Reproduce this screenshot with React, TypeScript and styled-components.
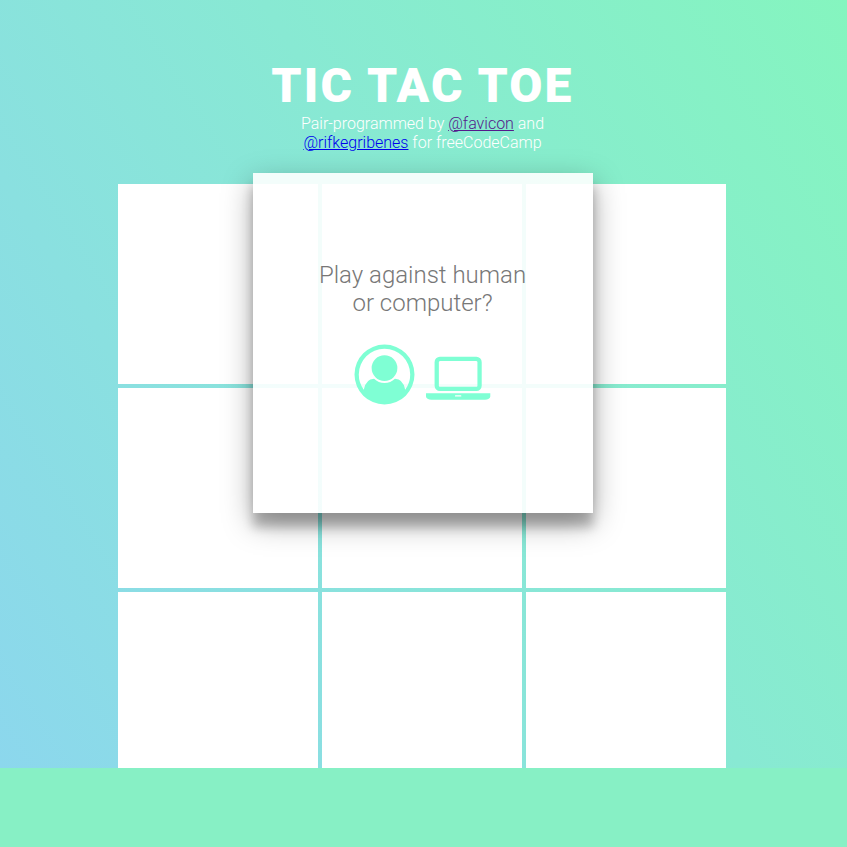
import React from "react";
import styled, { createGlobalStyle } from "styled-components";

const GlobalStyle = createGlobalStyle`
  * { box-sizing: border-box; }
  html { background: #87f0c5; }
  body {
    margin: 0;
    font-family: Roboto, "Liberation Sans", sans-serif;
    font-weight: 300;
  }
`;

const Page = styled.div`
  height: 768px;
  overflow: hidden;
  background: linear-gradient(58deg, #8cd7ed 0%, #88e9d3 56%, #85f5bf 100%);
`;

const Header = styled.header`
  height: 184px;
  padding: 58px 2px 0 0;
  text-align: center;
`;

const Title = styled.h1`
  margin: 0;
  font-size: 48px;
  line-height: 56px;
  font-weight: 900;
  letter-spacing: 2.2px;
  color: #fff;
`;

const Credits = styled.p`
  width: 300px;
  margin: 0 auto;
  font-size: 16px;
  line-height: 19px;
  color: #fff;
`;

const CreditLink = styled.a<{ $visited?: boolean }>`
  color: ${({ $visited }) => ($visited ? "#551a8b" : "#0000ee")};
  text-decoration: underline;
`;

const Board = styled.main`
  position: relative;
  width: 608px;
  margin-left: 118px;
  display: grid;
  grid-template-columns: repeat(3, 200px);
  grid-auto-rows: 200px;
  gap: 4px;
`;

const Cell = styled.div`
  background: #fff;
`;

const Modal = styled.section`
  position: absolute;
  top: -11px;
  left: 135px;
  width: 340px;
  height: 340px;
  padding: 88px 1px 0 0;
  background: rgba(255, 255, 255, 0.9);
  box-shadow: 0 10px 28px rgba(0, 0, 0, 0.34), 0 14px 10px rgba(0, 0, 0, 0.23);
  text-align: center;
`;

const Question = styled.h2`
  margin: 0;
  font-size: 24px;
  line-height: 28px;
  font-weight: 300;
  color: #777;
`;

const Choices = styled.div`
  display: flex;
  align-items: flex-start;
  gap: 11px;
  padding: 27px 0 0 101px;
`;

const Choice = styled.button<{ $drop?: number }>`
  display: flex;
  margin: ${({ $drop = 0 }) => $drop}px 0 0;
  padding: 0;
  border: 0;
  background: none;
  color: #7fffd4;
  cursor: pointer;

  svg {
    height: 61px;
    fill: currentColor;
  }
`;

const UserIcon = () => (
  <svg width="61" viewBox="-15 -15 1822 1822" aria-hidden="true">
    <path d="M896 0q182 0 348 71t286 191 191 286 71 348q0 181-70.5 347t-190.5 286-286 191.5-349 71.5-349-71-285.5-191.5-190.5-286-71-347.5 71-348 191-286 286-191 348-71zm619 1351q149-205 149-455 0-156-61-298t-164-245-245-164-298-61-298 61-245 164-164 245-61 298q0 250 149 455 66-327 306-327 131 128 313 128t313-128q240 0 306 327zm-235-647q0-159-112.5-271.5t-271.5-112.5-271.5 112.5-112.5 271.5 112.5 271.5 271.5 112.5 271.5-112.5 112.5-271.5z" />
  </svg>
);

const LaptopIcon = () => (
  <svg width="65" viewBox="0 -15 1941 1822" aria-hidden="true">
    <path d="M416 1152q-66 0-113-47t-47-113v-704q0-66 47-113t113-47h1088q66 0 113 47t47 113v704q0 66-47 113t-113 47h-1088zm-32-864v704q0 13 9.5 22.5t22.5 9.5h1088q13 0 22.5-9.5t9.5-22.5v-704q0-13-9.5-22.5t-22.5-9.5h-1088q-13 0-22.5 9.5t-9.5 22.5zm1376 928h160v96q0 40-47 68t-113 28h-1600q-66 0-113-28t-47-68v-96h1760zm-720 96q16 0 16-16t-16-16h-160q-16 0-16 16t16 16h160z" />
  </svg>
);

export default function App() {
  return (
    <>
      <GlobalStyle />
      <Page>
        <Header>
          <Title>TIC TAC TOE</Title>
          <Credits>
            Pair-programmed by <CreditLink href="#favicon" $visited>@favicon</CreditLink> and
            <br />
            <CreditLink href="#rifkegribenes">@rifkegribenes</CreditLink> for freeCodeCamp
          </Credits>
        </Header>
        <Board>
          {Array.from({ length: 9 }, (_, i) => (
            <Cell key={i} />
          ))}
          <Modal>
            <Question>
              Play against human
              <br />
              or computer?
            </Question>
            <Choices>
              <Choice aria-label="Human">
                <UserIcon />
              </Choice>
              <Choice aria-label="Computer" $drop={8}>
                <LaptopIcon />
              </Choice>
            </Choices>
          </Modal>
        </Board>
      </Page>
    </>
  );
}
